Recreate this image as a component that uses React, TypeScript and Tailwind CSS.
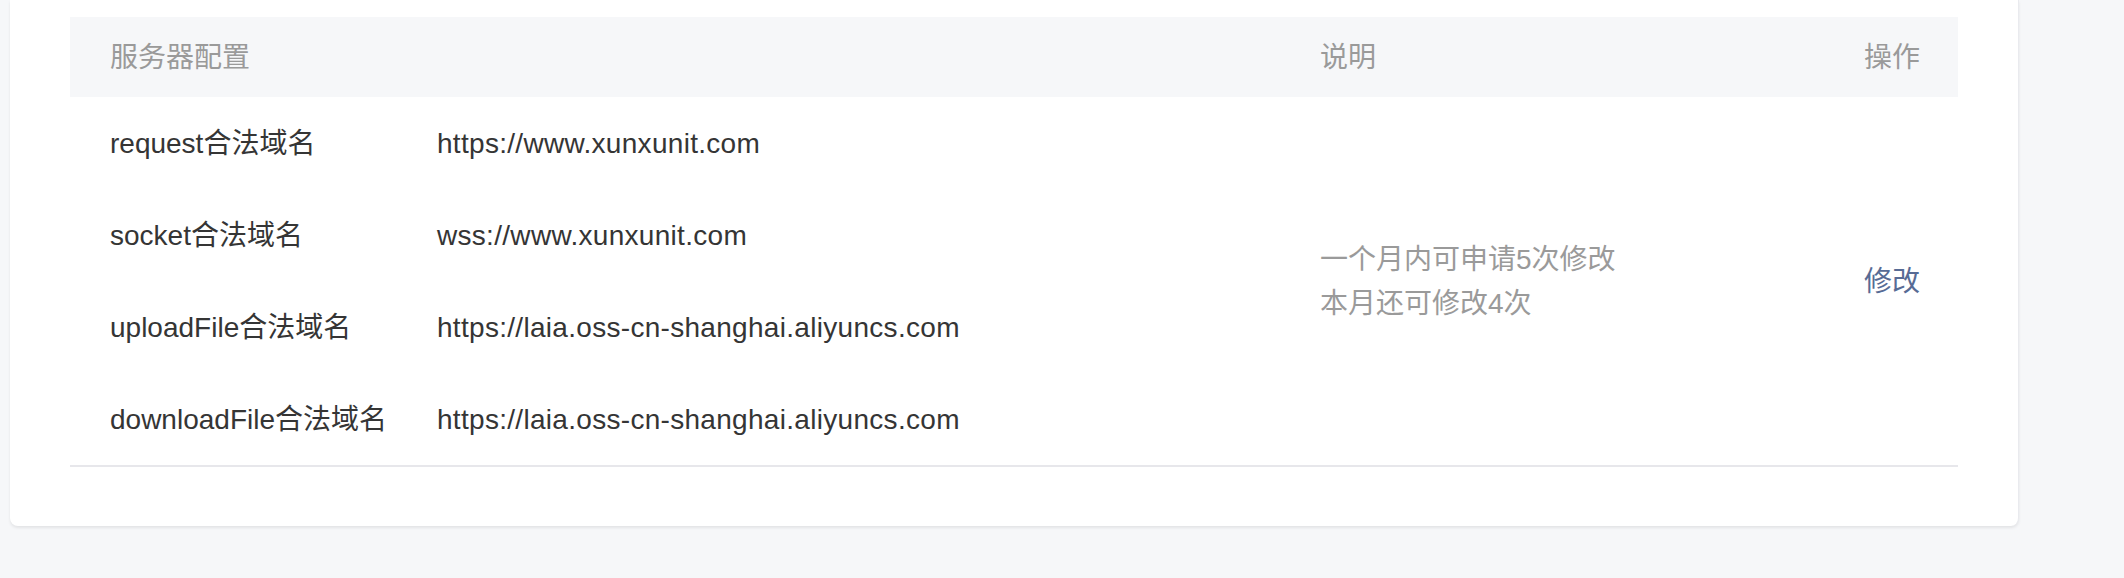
import React from 'react';

const domains = [
  { label: 'request合法域名', value: 'https://www.xunxunit.com' },
  { label: 'socket合法域名', value: 'wss://www.xunxunit.com' },
  { label: 'uploadFile合法域名', value: 'https://laia.oss-cn-shanghai.aliyuncs.com' },
  { label: 'downloadFile合法域名', value: 'https://laia.oss-cn-shanghai.aliyuncs.com' },
];

const App: React.FC = () => {
  return (
    <div
      className="w-[2124px] h-[578px] bg-[#f6f7f9] overflow-hidden"
      style={{ fontFamily: '"Liberation Sans", "Noto Sans CJK SC", sans-serif' }}
    >
      <div className="ml-[10px] w-[2009px] bg-white rounded-b-[8px] border-r border-[#e9eaee] shadow-[0_2px_3px_rgba(0,0,0,0.08)] pt-[17px] pb-[59px] px-[60px]">
        {/* header */}
        <div className="flex items-center h-[80px] pt-[2px] bg-[#f6f7f9] text-[28px] text-[#9a9a9a]">
          <div className="w-[1210px] pl-[40px]">服务器配置</div>
          <div className="flex-1 pl-[40px]">说明</div>
          <div className="pr-[38px]">操作</div>
        </div>

        {/* body */}
        <div className="flex border-b-2 border-[#e7e7eb] text-[28px]">
          <div className="w-[1210px] pl-[40px]">
            {domains.map((d, i) => (
              <div key={i} className="flex items-center h-[92px] pt-[1px] text-[#353535]">
                <div className="w-[327px]">{d.label}</div>
                <div className="tracking-[0.3px]">{d.value}</div>
              </div>
            ))}
          </div>
          <div className="flex-1 pl-[40px] pt-[1px] flex flex-col justify-center text-[#9a9a9a] leading-[44px]">
            <p>一个月内可申请5次修改</p>
            <p>本月还可修改4次</p>
          </div>
          <div className="pr-[38px] pt-[1px] flex items-center">
            <a className="text-[#576b95] cursor-pointer">修改</a>
          </div>
        </div>
      </div>
    </div>
  );
};

export default App;
